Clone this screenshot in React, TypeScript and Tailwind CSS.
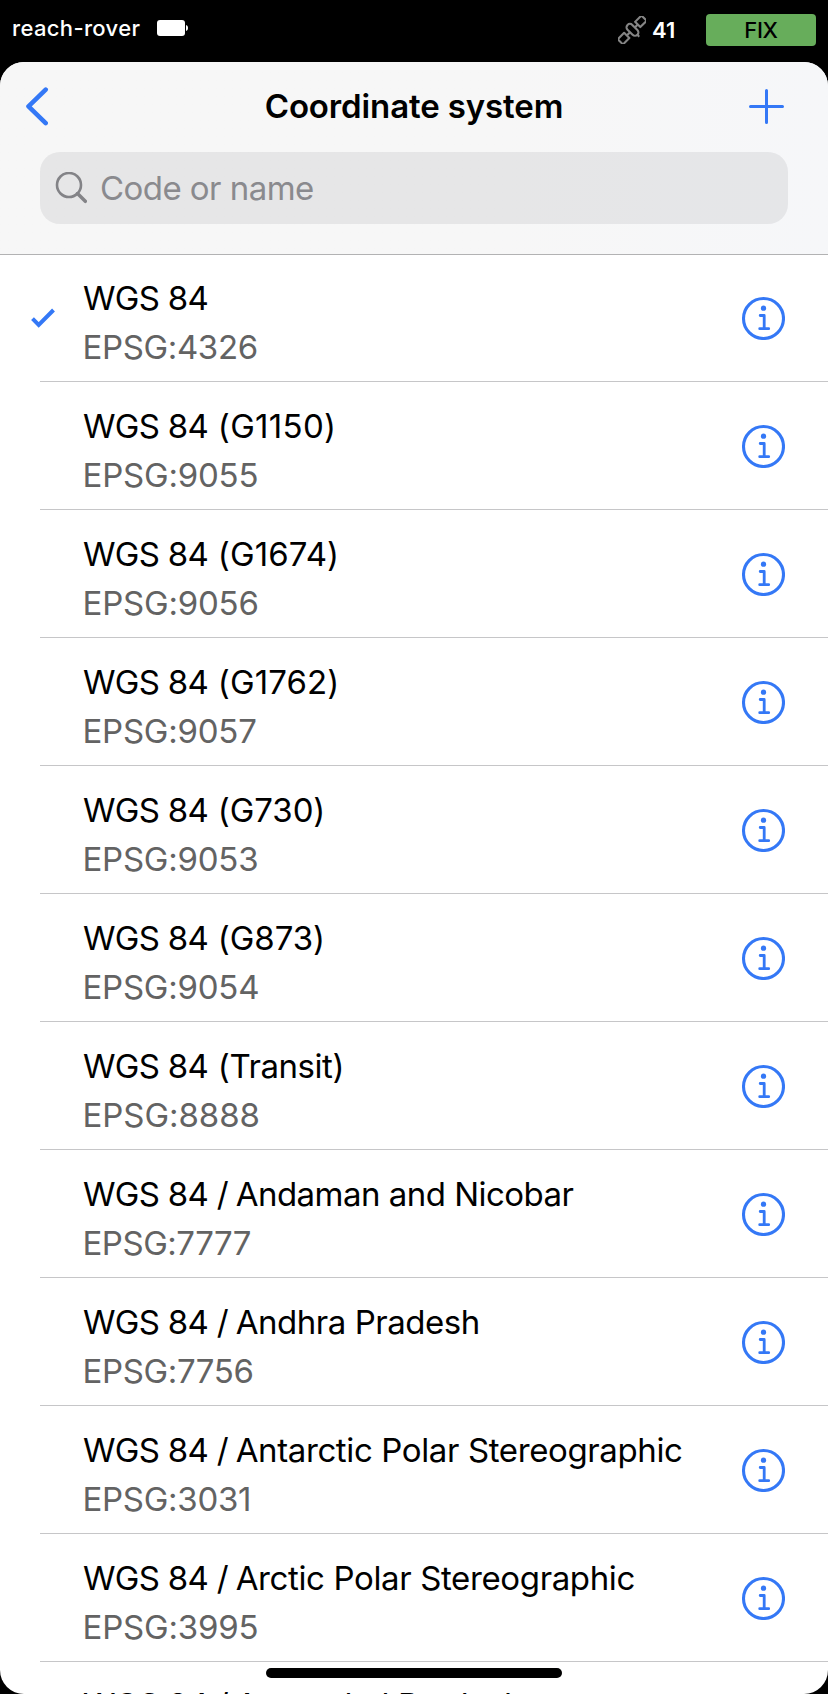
type System = { group: string; rest?: string; code: string; restTracking?: string; codeTracking: string };

const systems: System[] = [
  { group: "WGS 84", code: "EPSG:4326", codeTracking: "tracking-[-0.36px]" },
  { group: "WGS 84 ", rest: "(G1150)", code: "EPSG:9055", restTracking: "ml-[1px] tracking-[0.3px]", codeTracking: "tracking-[-0.2px]" },
  { group: "WGS 84 ", rest: "(G1674)", code: "EPSG:9056", restTracking: "ml-[1px] tracking-[0.1px]", codeTracking: "tracking-[-0.2px]" },
  { group: "WGS 84 ", rest: "(G1762)", code: "EPSG:9057", restTracking: "ml-[1px] tracking-[0.1px]", codeTracking: "tracking-[-0.24px]" },
  { group: "WGS 84 ", rest: "(G730)", code: "EPSG:9053", restTracking: "ml-[1px] tracking-[-0.1px]", codeTracking: "tracking-[-0.24px]" },
  { group: "WGS 84 ", rest: "(G873)", code: "EPSG:9054", restTracking: "ml-[1px] tracking-[-0.1px]", codeTracking: "tracking-[-0.24px]" },
  { group: "WGS 84 ", rest: "(Transit)", code: "EPSG:8888", restTracking: "ml-[1px] tracking-[-0.45px]", codeTracking: "tracking-[-0.05px]" },
  { group: "WGS 84 / ", rest: "Andaman and Nicobar", code: "EPSG:7777", restTracking: "-ml-[1px] tracking-[-0.52px]", codeTracking: "tracking-[-0.48px]" },
  { group: "WGS 84 / ", rest: "Andhra Pradesh", code: "EPSG:7756", restTracking: "-ml-[1px] tracking-[-0.46px]", codeTracking: "tracking-[-0.36px]" },
  { group: "WGS 84 / ", rest: "Antarctic Polar Stereographic", code: "EPSG:3031", restTracking: "-ml-[1px] tracking-[-0.38px]", codeTracking: "tracking-[-0.28px]" },
  { group: "WGS 84 / ", rest: "Arctic Polar Stereographic", code: "EPSG:3995", restTracking: "-ml-[1px] tracking-[-0.37px]", codeTracking: "tracking-[-0.2px]" },
  { group: "WGS 84 / ", rest: "Arunachal Pradesh", code: "EPSG:7757", restTracking: "-ml-[1px] tracking-[-0.46px]", codeTracking: "tracking-[-0.36px]" },
];

function Satellite() {
  return (
    <svg className="h-7 w-7" viewBox="0 0 28 28" fill="none" stroke="#858585" strokeWidth="2.1" strokeLinejoin="round">
      <g transform="translate(.6 0) rotate(-45 14 14)">
        <rect x="-3" y="10" width="9" height="7.4" />
        <rect x="21.5" y="10" width="9" height="7.4" />
        <rect x="10.6" y="6.8" width="6.8" height="14" rx="3.4" />
        <path d="M6 13.8h4.6M17.4 13.8h4.1M14 20.8v2.6" />
      </g>
    </svg>
  );
}

function Info() {
  return (
    <svg className="h-[44px] w-[44px]" viewBox="0 0 44 44" fill="none" stroke="#3478f6" strokeLinecap="round">
      <circle cx="22.5" cy="22.5" r="20" strokeWidth="3.1" />
      <circle cx="22.5" cy="12.2" r="2.6" fill="#3478f6" stroke="none" />
      <path d="M19.2 19.5h4v13M18.7 32.7h9" strokeWidth="2.8" strokeLinejoin="round" />
    </svg>
  );
}

export default function App() {
  return (
    <div className="flex h-[1694px] w-[828px] flex-col overflow-hidden bg-black font-['Inter',sans-serif]">
      <div className="flex h-[62px] shrink-0 items-start pl-3 pr-3 text-white">
        <span className="mt-3 w-[130px] whitespace-nowrap text-[22px] font-medium leading-8 tracking-[0.35px]">reach-rover</span>
        <svg className="ml-[15px] mt-5 h-4 w-8" viewBox="0 0 32 16" fill="#fff">
          <rect width="28" height="16" rx="3" />
          <path d="M29 5c2.7.5 2.7 5.5 0 6z" />
        </svg>
        <div className="ml-auto flex">
          <div className="mt-4"><Satellite /></div>
          <span className="ml-[6px] mr-[29px] mt-[14px] w-[25px] text-[22px] font-semibold leading-8">41</span>
          <div className="mt-[14px] flex h-8 w-[110px] items-center justify-center rounded bg-[#67ad5b] text-[22px] font-medium tracking-[-0.3px] text-black">FIX</div>
        </div>
      </div>
      <div className="relative flex min-h-0 flex-1 flex-col overflow-hidden rounded-[24px] bg-white">
        <header className="h-[193px] shrink-0 border-b border-[#b2b2b3] bg-linear-to-r from-[#f7f7f7] from-60% to-[#f6f7f9]">
          <div className="grid h-[88px] grid-cols-[1fr_auto_1fr] items-center pl-[25px] pr-[43px]">
            <svg className="h-10 w-6" viewBox="0 0 24 40" fill="none" stroke="#3478f6" strokeWidth="4.6" strokeLinecap="round" strokeLinejoin="round">
              <path d="M20.7 3.6 3.5 20.3l17.2 16.8" />
            </svg>
            <h1 className="-mt-px ml-[18px] text-[33px] font-semibold leading-10 tracking-[-0.12px]">Coordinate system</h1>
            <svg className="h-9 w-9 justify-self-end" viewBox="0 0 36 36" stroke="#3478f6" strokeWidth="3" strokeLinecap="round">
              <path d="M17.5 2.5v32M1.5 18.5h32" />
            </svg>
          </div>
          <div className="mx-10 mt-[2px] flex h-[72px] items-center rounded-[20px] bg-[#767680]/[0.135] pl-[15px] text-[#8a8a8e]">
            <svg className="h-8 w-8" viewBox="0 0 32 32" fill="none" stroke="#838387">
              <circle cx="14" cy="13" r="12" strokeWidth="2.6" />
              <path d="m22.5 21.5 7.8 7.8" strokeWidth="3.5" strokeLinecap="round" />
            </svg>
            <span className="ml-[13px] text-[33px] leading-10 tracking-[-0.55px]">Code or name</span>
          </div>
        </header>
        <ul className="-mt-px">
          {systems.map((s, i) => (
            <li key={s.code} className="flex h-32 pl-10 last:-mt-px">
              <div className="flex w-[43px] shrink-0 items-center border-b border-[#c6c6c8]">
                {i === 0 && (
                  <svg className="-ml-[10px] h-6 w-[27px]" viewBox="0 0 27 24" fill="none" stroke="#3478f6" strokeWidth="4">
                    <path d="m2.5 12.6 6.2 6.2L23.5 4" />
                  </svg>
                )}
              </div>
              <div className="flex flex-1 items-center justify-between border-b border-[#c6c6c8] pr-[43px]">
                <div className="whitespace-pre pt-[10px] text-[33px] leading-[49px] text-black">
                  <div>
                    <span className="tracking-[-0.68px]">{s.group}</span>
                    <span className={s.restTracking}>{s.rest}</span>
                  </div>
                  <div className={`-ml-[0.5px] text-[#636363] ${s.codeTracking}`}>{s.code}</div>
                </div>
                <Info />
              </div>
            </li>
          ))}
        </ul>
        <div className="absolute bottom-4 left-[266px] h-[10px] w-[296px] rounded-full bg-black" />
      </div>
    </div>
  );
}
